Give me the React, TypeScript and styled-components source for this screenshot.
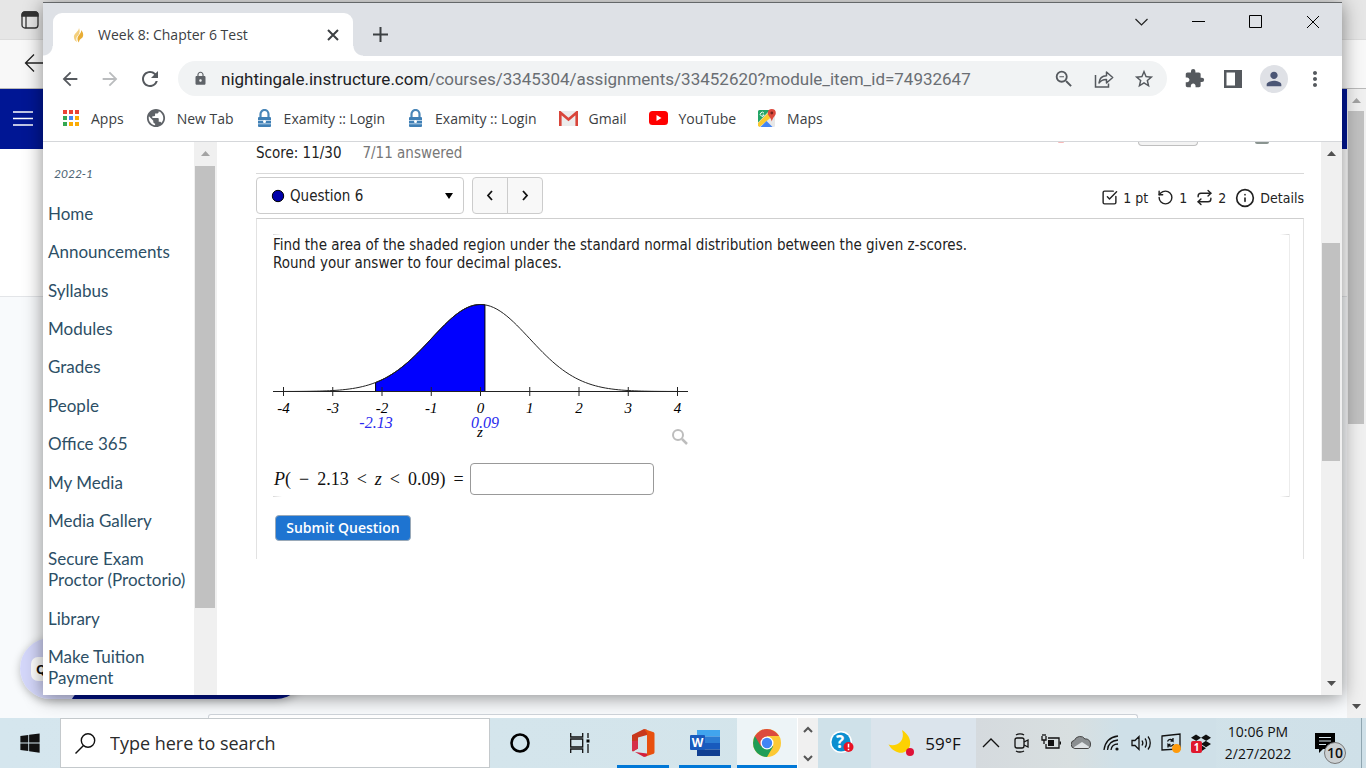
import React from 'react';
import styled, { createGlobalStyle, css } from 'styled-components';
import { MdArrowBack, MdArrowForward, MdRefresh, MdLock, MdZoomOut, MdStarBorder, MdExtension, MdPerson, MdMoreVert, MdPublic } from 'react-icons/md';
import { FaWindows, FaDropbox } from 'react-icons/fa';
import { SquareCheckBig, RotateCcw, Repeat, Info } from 'lucide-react';

const ui = '"Open Sans", "Noto Sans", sans-serif';
const quiz = '"DejaVu Sans Condensed", "DejaVu Sans", sans-serif';
const serif = '"Liberation Serif", serif';

const GlobalStyle = createGlobalStyle`
  *, *::before, *::after { box-sizing: border-box; }
  body { margin: 0; background: #f7f9fb; font-family: ${ui}; }
  button, input, select { font: inherit; color: inherit; margin: 0; }
  button { padding: 0; border: 0; background: none; display: inline-flex; align-items: center; justify-content: center; }
  a { color: inherit; text-decoration: none; }
  svg { display: block; flex: none; }
`;

const Desktop = styled.div`
  display: flex;
  flex-direction: column;
  min-height: 100vh;
`;
const Stage = styled.div`
  position: relative;
  flex: 1;
  display: flex;
  flex-direction: column;
  overflow: hidden;
`;

/* Window at the back */
const BackTabs = styled.div`
  height: 40px;
  padding: 11px 0 0 21px;
  background: #e6e6e6;
  border-bottom: 1px solid #dcdcdc;
`;
const BackToolbar = styled.div`
  height: 49px;
  padding: 13px 0 0 24px;
  background: #f8f8f8;
  border-bottom: 1px solid #b9b9b9;
`;
const BackBody = styled.div`
  flex: 1;
  display: flex;
`;
const BackPage = styled.div`
  flex: 1;
  display: flex;
  flex-direction: column;
  background: #f8fafc;
`;
const BackHeader = styled.div`
  height: 60px;
  padding: 21px 12px;
  background: #001694;
`;
const BackIntro = styled.div`
  height: 148px;
  background: #fff;
  border-bottom: 1px solid #e3e5e8;
`;
const BackCard = styled.div`
  height: 4px;
  margin: auto 209px 0 208px;
  background: #fff;
  border: 1px solid #cfd4da;
  border-bottom: 0;
  border-radius: 3px 3px 0 0;
`;
const ChatLauncher = styled.div`
  position: absolute;
  left: 20px;
  bottom: 19px;
  width: 286px;
  height: 61px;
  display: flex;
  align-items: center;
  border-radius: 31px;
  background: linear-gradient(125deg, #d4d7fa 77px, #001080 78px);
  box-shadow: 0 2px 8px rgba(0, 0, 0, 0.25);
`;
const ChatBubble = styled.span`
  margin-left: 11px;
  padding: 0 5px;
  border-radius: 7px;
  background: #fff;
  color: #111;
  font: 700 13px/24px ${ui};
`;

/* Scroll bars */
const ScrollTrack = styled.div<{ $width: number }>`
  width: ${p => p.$width}px;
  flex: none;
  display: flex;
  flex-direction: column;
  align-items: center;
  background: #f0f0f0;
`;
const ScrollArrow = styled.span<{ $dir: 'up' | 'down'; $dim?: boolean }>`
  flex: none;
  width: 9px;
  height: 5px;
  margin: ${p => (p.$dir === 'up' ? '9px 0 8px' : '8px 0 9px')};
  background: ${p => (p.$dim ? '#a3a3a3' : '#505050')};
  clip-path: ${p => (p.$dir === 'up' ? 'polygon(50% 0, 100% 100%, 0 100%)' : 'polygon(0 0, 100% 0, 50% 100%)')};
`;
const ScrollSpace = styled.span<{ $grow: number }>`
  flex: ${p => p.$grow} 1 0;
`;
const ScrollThumb = styled.span<{ $grow: number }>`
  flex: ${p => p.$grow} 1 0;
  align-self: stretch;
  margin: 0 2px 0 1px;
  background: #c1c1c1;
`;

/* Browser window */
const Window = styled.section`
  position: absolute;
  inset: 2px 24px 23px 43px;
  display: flex;
  flex-direction: column;
  background: #fff;
  border-top: 1px solid #646769;
  box-shadow: 0 2px 18px rgba(0, 0, 0, 0.45);
`;
const TitleBar = styled.header`
  height: 53px;
  flex: none;
  display: flex;
  padding: 0 1px 0 10px;
  background: #dee1e6;
`;
const Tab = styled.div`
  position: relative;
  display: flex;
  align-items: center;
  width: 300px;
  height: 43px;
  margin-top: 10px;
  padding: 0 14px 0 19px;
  gap: 12px;
  background: #fff;
  border-radius: 9px 9px 0 0;
  color: #3c4043;
  font-size: 14px;
  &::before, &::after {
    content: '';
    position: absolute;
    bottom: 0;
    width: 10px;
    height: 10px;
  }
  &::before { left: -10px; background: radial-gradient(circle at 0 0, transparent 9px, #fff 10px); }
  &::after { right: -10px; background: radial-gradient(circle at 100% 0, transparent 9px, #fff 10px); }
`;
const TabTitle = styled.span`
  flex: 1;
  white-space: nowrap;
`;
const NewTab = styled.button`
  width: 24px;
  height: 24px;
  margin: 19px auto 0 15px;
`;
const Caption = styled.div`
  display: flex;
  align-self: flex-start;
  button { width: 57px; height: 37px; }
`;
const Toolbar = styled.div`
  height: 45px;
  flex: none;
  display: flex;
  align-items: center;
  gap: 15px;
  padding: 0 15px;
  color: #5f6368;
`;
const NavButtons = styled.div`
  display: flex;
  gap: 16px;
  margin-right: 1px;
`;
const IconButton = styled.button<{ $dim?: boolean }>`
  width: 24px;
  height: 24px;
  font-size: 22px;
  color: ${p => (p.$dim ? '#babcbe' : '#55595e')};
`;
const Omnibox = styled.div`
  flex: 1;
  min-width: 0;
  display: flex;
  align-items: center;
  gap: 16px;
  height: 35px;
  padding: 0 11px 0 15px;
  border-radius: 18px;
  background: #f1f3f4;
`;
const Url = styled.p`
  flex: 1;
  min-width: 0;
  overflow: hidden;
  margin: 0 0 0 -3px;
  font: 17px/24px Roboto, ${ui};
  white-space: nowrap;
  color: #6a6e73;
  b { font-weight: 400; color: #202124; }
`;
const Avatar = styled.button`
  width: 28px;
  height: 28px;
  border-radius: 50%;
  background: #dfe1e6;
  color: #4b5675;
  font-size: 22px;
`;
const Bookmarks = styled.nav`
  height: 41px;
  flex: none;
  display: flex;
  align-items: center;
  gap: 22px;
  padding: 0 19px 6px;
  border-bottom: 1px solid #d5d7da;
  color: #3c4043;
  font-size: 14px;
`;
const Bookmark = styled.a`
  display: flex;
  align-items: center;
  gap: 11px;
  white-space: nowrap;
  color: #3c4043;
`;

/* Course page */
const Page = styled.div`
  flex: 1;
  min-height: 0;
  display: flex;
`;
const Sidebar = styled.nav`
  width: 151px;
  flex: none;
  display: flex;
  flex-direction: column;
  padding: 24px 5px 7px;
  font: 17px/21px Lato, ${ui};
  color: #2d4f66;
`;
const Term = styled.p`
  margin: 0 0 21px 6px;
  font: italic 12px/16px Lato, ${ui};
  color: #4d6474;
`;
const CourseLinks = styled.ul`
  flex: 1;
  display: flex;
  flex-direction: column;
  justify-content: space-between;
  margin: 0;
  padding: 0;
  list-style: none;
  a { display: block; white-space: pre; }
`;
const Content = styled.main`
  flex: 1;
  min-width: 0;
  padding: 0 17px 0 39px;
  font: 15px/18px ${quiz};
  color: #222;
`;
const CutOffRow = styled.div`
  height: 4px;
  display: flex;
  justify-content: flex-end;
  align-items: flex-start;
  padding-right: 35px;
`;
const CutOffMark = styled.span<{ $w: number; $h: number; $color: string; $gap: number }>`
  width: ${p => p.$w}px;
  height: ${p => p.$h}px;
  margin-right: ${p => p.$gap}px;
  background: ${p => p.$color};
  border-radius: 0 0 6px 6px;
`;
const CutOffButton = styled.span`
  width: 60px;
  height: 4px;
  margin-right: 57px;
  background: #f3f3f3;
  border: 1px solid #bfbfbf;
  border-top: 0;
  border-radius: 0 0 4px 4px;
`;
const ScoreRow = styled.div`
  display: flex;
  gap: 21px;
  height: 28px;
  margin-bottom: 3px;
  border-bottom: 1px solid #d9d9d9;
  line-height: 14px;
  span + span { color: #777; }
`;
const QuestionBar = styled.div`
  display: flex;
  align-items: center;
  height: 37px;
  margin-bottom: 4px;
`;
const Picker = styled.label`
  display: grid;
  align-items: center;
  width: 208px;
  height: 37px;
  border: 1px solid #ccc;
  border-radius: 4px;
  background: #fff;
  > * { grid-area: 1 / 1; }
  svg:first-child { margin-left: 14px; }
  svg:last-child { margin-right: 10px; justify-self: end; }
  svg { pointer-events: none; z-index: 1; }
`;
const PickerSelect = styled.select`
  appearance: none;
  width: 100%;
  height: 35px;
  padding: 0 24px 0 33px;
  border: 0;
  background: transparent;
  font-size: 15px;
`;
const Pager = styled.div`
  display: flex;
  margin-left: 8px;
  border: 1px solid #ccc;
  border-radius: 4px;
  background: #f8f8f8;
  button { width: 34px; height: 35px; }
  button + button { width: 35px; border-left: 1px solid #ccc; }
`;
const Details = styled.div`
  display: flex;
  align-items: center;
  gap: 9px;
  margin: 4px 0 0 auto;
  font-size: 14px;
`;
const Detail = styled.span`
  display: flex;
  align-items: center;
  gap: 5px;
`;
const QuestionBox = styled.section`
  padding: 15px 13px 18px 16px;
  border: 1px solid #e2e2e2;
  border-top-color: #cfcfcf;
  border-bottom: 0;
`;
const QuestionBody = styled.div`
  height: 263px;
  padding-top: 2px;
  border-right: 1px solid #ececec;
  background:
    linear-gradient(90deg, #d8d8d8, #fff) left top / 9px 1px no-repeat,
    linear-gradient(90deg, #d8d8d8, #fff) left bottom / 9px 1px no-repeat,
    linear-gradient(270deg, #d8d8d8, #fff) right top / 9px 1px no-repeat,
    linear-gradient(270deg, #d8d8d8, #fff) right bottom / 9px 1px no-repeat;
`;
const Prompt = styled.p`
  margin: 0 0 23px;
`;
const Answer = styled.label`
  display: flex;
  align-items: center;
  margin-top: 18px;
  font: 18px/32px ${serif};
  color: #111;
`;
const Formula = styled.span`
  display: flex;
  gap: 8px;
  padding-left: 1px;
  margin-right: 6px;
  white-space: nowrap;
`;
const AnswerInput = styled.input`
  width: 184px;
  height: 32px;
  padding: 4px 8px;
  border: 1px solid #999;
  border-radius: 4px;
  background: #fff;
`;
const Submit = styled.button`
  width: 136px;
  height: 26px;
  margin: 18px 0 0 2px;
  border: 1px solid #9aa9b8;
  border-radius: 4px;
  background: #1e74d1;
  color: #fff;
  font: 600 14px/18px "Open Sans", sans-serif;
`;

/* Task bar */
const Taskbar = styled.footer`
  height: 50px;
  flex: none;
  display: flex;
  background: linear-gradient(90deg, #d5e6ee, #d3e4ea 70%, #cfe0e8);
  color: #111;
`;
const Cell = styled.button<{ $w?: number; $open?: boolean; $active?: boolean; $tint?: string }>`
  position: relative;
  width: ${p => p.$w || 60}px;
  height: 50px;
  flex: none;
  background: ${p => (p.$active ? '#edf4f7' : p.$tint || 'transparent')};
  ${p => (p.$open || p.$active) && css`
    &::after {
      content: '';
      position: absolute;
      bottom: 0;
      left: ${p.$active ? 0 : 4}px;
      right: ${p.$active ? 0 : 4}px;
      height: 3px;
      background: #0078d7;
    }
  `}
`;
const Search = styled.label`
  flex: 0 1 430px;
  min-width: 0;
  display: flex;
  align-items: center;
  gap: 12px;
  padding-left: 14px;
  border: 1px solid #c4c9cc;
  background: #fff;
`;
const SearchInput = styled.input`
  flex: 1;
  min-width: 0;
  border: 0;
  background: none;
  font-size: 18px;
  &::placeholder { color: #2b2b2b; opacity: 1; }
`;
const Apps = styled.div`
  display: flex;
  gap: 2px;
  margin-left: 3px;
`;
const Scroller = styled.div`
  width: 21px;
  flex: none;
  display: flex;
  flex-direction: column;
  justify-content: space-between;
  padding: 6px 0 5px;
  background: #f0f0f0;
  border-left: 1px solid #fff;
  button { height: 10px; }
`;
const Tray = styled.div`
  display: flex;
  margin-left: auto;
`;
const Weather = styled.button`
  width: 105px;
  height: 50px;
  gap: 10px;
  padding-left: 2px;
  background: #dbe4ec;
  font-size: 17px;
  white-space: nowrap;
`;
const TrayIcons = styled.div`
  display: flex;
  background: linear-gradient(90deg, #d5dade, #d8dfe0 40%, #cfe0e8 60%);
`;
const Clock = styled.time`
  width: 84px;
  padding-top: 3px;
  font-size: 14px;
  line-height: 22px;
  text-align: center;
`;
const ShowDesktop = styled.div`
  width: 5px;
  margin-left: 11px;
  border-left: 1px solid #8fa5b0;
`;

function Flame() {
  return (
    <svg width="14" height="16" viewBox="0 0 14 16">
      <path d="M7 1C7 5 1 6 2 11c.3 2 1.500 3 3 4C3.500 11 5 9.500 6.500 8 8 6 8 3 7 1z" fill="#f3cf7d" />
      <path d="M9 3c1 3-3 5-3.500 8-.2 2 .5 3.500 1.500 4.500C6.800 13 8.500 12 10 11c2-2 1.500-5.500-1-8z" fill="#e8ad35" />
    </svg>
  );
}

function Cross({ size, width = 1 }: { size: number; width?: number }) {
  return (
    <svg width={size} height={size} viewBox={`0 0 ${size} ${size}`} stroke="currentColor" strokeWidth={width}>
      <path d={`M1 1L${size - 1} ${size - 1}M${size - 1} 1L1 ${size - 1}`} />
    </svg>
  );
}

function ShareIcon() {
  return (
    <svg width="20" height="20" viewBox="0 0 20 20" fill="none" stroke="currentColor" strokeWidth="1.500">
      <path d="M1.500 6v12h13v-3.500" />
      <path d="M5 14c.5-5 3-7.200 7.500-7.200V3l6.200 5.500-6.200 5.500v-3.500C9 10.300 7 11.500 5 14z" strokeLinejoin="round" />
    </svg>
  );
}

function AppsIcon() {
  const colors = ['#ea4335', '#ea4335', '#ea4335', '#34a853', '#4285f4', '#fbab05', '#34a853', '#fbab05', '#fbab05'];
  return (
    <svg width="18" height="18" viewBox="0 0 18 18">
      {colors.map((c, i) => <rect key={i} x={1 + (i % 3) * 6} y={1 + Math.floor(i / 3) * 6} width="4" height="4" fill={c} />)}
    </svg>
  );
}

function GlobeIcon() {
  return <MdPublic size={20} viewBox="1 1 22 22" color="#5f6368" />;
}

function PadlockIcon() {
  return (
    <svg width="17" height="18" viewBox="0 0 17 18">
      <path d="M4.500 9V5a4 4 0 0 1 8 0v4" fill="none" stroke="#4a86b8" strokeWidth="2.200" />
      <rect x="2" y="8" width="13" height="10" rx="1" fill="#3f7fb5" />
      <path d="M2 11.500h13M2 14.800h13" stroke="#b7d2e8" />
      <circle cx="8.500" cy="12.500" r="1.500" fill="#fff" />
    </svg>
  );
}

function GmailIcon() {
  return (
    <svg width="19" height="15" viewBox="0 0 19 15">
      <rect width="19" height="15" rx="1.500" fill="#ececec" />
      <path d="M1.300 15V1.500L9.500 8.500l8.200-7V15" fill="none" stroke="#d9453a" strokeWidth="2.600" />
    </svg>
  );
}

function YouTubeIcon() {
  return (
    <svg width="19" height="14" viewBox="0 0 19 14">
      <rect width="19" height="14" rx="3.500" fill="#f00" />
      <path d="M7.500 4v6l5-3z" fill="#fff" />
    </svg>
  );
}

function MapsIcon() {
  return (
    <svg width="18" height="18" viewBox="0 0 18 18">
      <rect y="1" width="17" height="17" rx="1.500" fill="#e8e8e8" />
      <path d="M1.500 1H12L0 13.500V2.500A1.500 1.500 0 0 1 1.500 1z" fill="#23a566" />
      <path d="M0 14L11 3l3 4.500L1.500 18 0 16.500z" fill="#fbcb2f" />
      <path d="M2.500 18l6-6 6 6z" fill="#4285f4" />
      <path d="M13.800 0a4 4 0 0 1 4 4c0 3-3 4-4 8.500-1-4.500-4-5.500-4-8.500a4 4 0 0 1 4-4z" fill="#dd4b3e" />
      <circle cx="13.800" cy="4" r="1.400" fill="#7a231c" />
      <path d="M6 4.200A2 2 0 1 0 6.200 6H4.500" fill="none" stroke="#fff" />
    </svg>
  );
}

const X0 = 207.5;
const UNIT = 49.25;
const AXIS = 96.5;
const curve = (from: number, to: number) => {
  const points: string[] = [];
  for (let i = 0; i <= 120; i++) {
    const z = from + ((to - from) * i) / 120;
    points.push(`${(X0 + z * UNIT).toFixed(2)} ${(AXIS - 87 * Math.exp((-z * z) / 2)).toFixed(2)}`);
  }
  return points.join('L');
};

const Chart = styled.svg`
  font: italic 15px ${serif};
  text-anchor: middle;
`;

function NormalCurve() {
  const left = X0 - 2.13 * UNIT;
  const right = X0 + 0.09 * UNIT;
  return (
    <Chart width="416" height="150" viewBox="0 0 416 150" role="img" aria-label="Standard normal curve">
      <path d={`M${left} ${AXIS}L${curve(-2.13, 0.09)}L${right} ${AXIS}Z`} fill="#00f" stroke="#000" />
      <path d={`M${curve(-4, 4)}`} fill="none" stroke="#222" />
      <path d={`M0 ${AXIS}H415`} stroke="#222" />
      {[-4, -3, -2, -1, 0, 1, 2, 3, 4].map(n => (
        <g key={n}>
          <path d={`M${X0 + n * UNIT} 92v9`} stroke="#222" />
          <text x={X0 + n * UNIT} y="118">{n}</text>
        </g>
      ))}
      <text x={103} y="133" fill="#2a2aee" fontSize="16">-2.13</text>
      <text x={212} y="133" fill="#2a2aee" fontSize="16">0.09</text>
      <text x={207} y="142">z</text>
      <g fill="none" stroke="#bdbdbd">
        <circle cx="405" cy="140" r="5" strokeWidth="2" />
        <path d="M409 144l5 5" strokeWidth="2.500" />
      </g>
    </Chart>
  );
}

function OfficeIcon() {
  return (
    <svg width="24" height="30" viewBox="0 0 24 30">
      <path d="M1 7L13 1l3 .8V7L7 9.500v11L2 23.500c-1-.5-1-1-1-2z" fill="#c8381c" />
      <path d="M1 13v9c0 1 .5 1.500 1.500 1l4.500-2.500v-8z" fill="#d6304a" />
      <path d="M13 1l9 3c1 .4 1.500 1 1.500 2v18c0 1-.5 1.600-1.500 2l-9 3 3-3V5z" fill="#e8500f" />
      <path d="M4 24l12 1.500v2.500l-3 1z" fill="#d3203c" />
    </svg>
  );
}

const WordLetter = styled.text`
  font: 700 12px ${ui};
  text-anchor: middle;
  fill: #fff;
`;

function WordIcon() {
  return (
    <svg width="30" height="26" viewBox="0 0 30 26">
      <path d="M7 0h23v6.500H7z" fill="#41a5ee" />
      <path d="M7 6.500h23V13H7z" fill="#2b7cd3" />
      <path d="M7 13h23v6.500H7z" fill="#185abd" />
      <path d="M7 19.500h23V26H7z" fill="#103f91" />
      <rect y="5" width="15" height="15" rx="1" fill="#185abd" />
      <WordLetter x="7.500" y="17">W</WordLetter>
    </svg>
  );
}

function ChromeIcon() {
  return (
    <svg width="28" height="28" viewBox="0 0 28 28">
      <circle cx="14" cy="14" r="14" fill="#fcc934" />
      <path d="M14 14L1.900 7A14 14 0 0 0 14 28l6.100-10.500z" fill="#1f9d57" />
      <path d="M1.900 7a14 14 0 0 1 24.200 0H14v7L8 17.500z" fill="#dc4a3d" />
      <circle cx="14" cy="14" r="6.500" fill="#fff" />
      <circle cx="14" cy="14" r="5.200" fill="#4285f4" />
    </svg>
  );
}

const GlyphText = styled.text<{ $size: number; $fill: string }>`
  font: 700 ${p => p.$size}px ${ui};
  text-anchor: middle;
  fill: ${p => p.$fill};
`;

function HelpIcon() {
  return (
    <svg width="30" height="24" viewBox="0 0 30 24">
      <circle cx="11" cy="11" r="11" fill="#fff" />
      <circle cx="11" cy="11" r="9.500" fill="#0c8fd0" />
      <GlyphText $size={17} $fill="#fff" x="10" y="17">?</GlyphText>
      <circle cx="18.500" cy="16" r="5" fill="#e81123" />
      <path d="M18.500 12.800v3.700M18.500 17.700v1.500" stroke="#fff" strokeWidth="1.500" />
    </svg>
  );
}

function MoonIcon() {
  return (
    <svg width="27" height="27" viewBox="0 0 27 27">
      <path d="M14 0c6 4 9 9 8 15-1 7-9 10-15 6-3-1.500-5-4-6.500-6.500C8 17 18 12 14 0z" fill="#fdd102" />
      <circle cx="22" cy="22" r="4" fill="#df1138" />
    </svg>
  );
}

const trayIcons: [string, React.ReactNode][] = [
  ['Show hidden icons', <path d="M2 14l8-8 8 8" />],
  ['Meet now', <><rect x="4" y="5" width="9" height="10" rx="2" /><path d="M13 9l4-2v7l-4-2M5 2c2-1.500 6-1.500 8 0M5 18c2 1.300 6 1.300 8 0" /></>],
  ['Power', <><path d="M7 5h11v10H5v-4M19.500 8.500v3" /><path d="M7 7h6v6H7z" fill="#111" stroke="none" /><path d="M1 3v4h4V3M2 1v2M4 1v2M3 7v4" /></>],
  ['OneDrive', <><path d="M4 15.500a4.200 4.200 0 0 1-.5-8.300A6 6 0 0 1 14 6c3-.5 5.500 2 5.500 5s-1 4.500-3.500 4.500z" fill="#8b8f91" stroke="#444" strokeWidth="1" /><path d="M2.500 14.500L11 9l7.500 5c-.7.900-1.500 1-2.500 1H4z" fill="#dfe3e5" stroke="none" /></>],
  ['Network', <><path d="M3 17C4 9 9 4 17 3M6.500 17C7 11 11 7.500 17 7M10 17c.5-3.500 3-6 7-6" /><circle cx="16" cy="16" r="1.600" fill="#111" stroke="none" /></>],
  ['Volume', <path d="M1 7.500h3l4-4v13l-4-4H1zM11 7.500c1 1.500 1 3.500 0 5M14 5.500c2 2.500 2 6.500 0 9M17 3.500c3 3.500 3 9.500 0 13" />],
  ['Updates', <><path d="M1 3l18-2v15L1 17z" /><path d="M6.500 8.500c1-2.500 4-3 5.500-.8V5M12.200 8H9.500M12.500 11c-1 2.500-4 3-5.500.8v2.700M6.800 11.500h2.700" /><circle cx="15.500" cy="15.500" r="4.500" fill="#ff9a0a" stroke="none" /></>],
];

const BadgeText = styled.span`
  position: absolute;
  left: 5px;
  bottom: 15px;
  width: 11px;
  border-radius: 2px;
  background: #e0182d;
  color: #fff;
  font: 700 10px/12px ${ui};
`;
const CountBadge = styled.span`
  position: absolute;
  left: 24px;
  top: 24px;
  width: 22px;
  height: 22px;
  border: 1px solid #777;
  border-radius: 50%;
  background: #ccd1d3;
  color: #111;
  font: 600 14px/20px ${ui};
`;

const bookmarks: [string, React.ReactNode][] = [
  ['Apps', <AppsIcon />],
  ['New Tab', <GlobeIcon />],
  ['Examity :: Login', <PadlockIcon />],
  ['Examity :: Login', <PadlockIcon />],
  ['Gmail', <GmailIcon />],
  ['YouTube', <YouTubeIcon />],
  ['Maps', <MapsIcon />],
];

const courseLinks = ['Home', 'Announcements', 'Syllabus', 'Modules', 'Grades', 'People', 'Office 365', 'My Media', 'Media Gallery', 'Secure Exam\nProctor (Proctorio)', 'Library', 'Make Tuition\nPayment'];

function Scrollbar({ width, before, thumb, after, dim, open }: { width: number; before: number; thumb: number; after: number; dim?: boolean; open?: boolean }) {
  return (
    <ScrollTrack $width={width} aria-hidden="true">
      <ScrollArrow $dir="up" $dim={dim} />
      <ScrollSpace $grow={before} />
      <ScrollThumb $grow={thumb} />
      <ScrollSpace $grow={after} />
      {!open && <ScrollArrow $dir="down" />}
    </ScrollTrack>
  );
}

function BackWindow() {
  return (
    <>
      <BackTabs>
        <svg width="18" height="18" viewBox="0 0 18 18" fill="none" stroke="#333" strokeWidth="1.300">
          <rect x="1" y="1" width="16" height="16" rx="3" />
          <path d="M1 3.500A2.500 2.500 0 0 1 3.500 1h11A2.500 2.500 0 0 1 17 3.500V5H1z" fill="#333" />
          <path d="M5 5v12" />
        </svg>
      </BackTabs>
      <BackToolbar>
        <svg width="20" height="20" viewBox="0 0 20 20" fill="none" stroke="#222" strokeWidth="1.300"><path d="M20 10H2M10 1.500L1.500 10l8.500 8.500" /></svg>
      </BackToolbar>
      <BackBody>
        <BackPage>
          <BackHeader>
            <svg width="22" height="17" viewBox="0 0 22 17" stroke="#fff" strokeWidth="1.600"><path d="M1 2h20M1 8.500h20M1 15h20" /></svg>
          </BackHeader>
          <BackIntro />
          <BackCard />
        </BackPage>
        <Scrollbar width={19} before={0} thumb={314} after={272} dim />
      </BackBody>
      <ChatLauncher><ChatBubble>Q</ChatBubble></ChatLauncher>
    </>
  );
}

export default function App() {
  return (
    <Desktop>
      <GlobalStyle />
      <Stage>
        <BackWindow />
        <Window>
          <TitleBar>
            <Tab>
              <Flame />
              <TabTitle>Week 8: Chapter 6 Test</TabTitle>
              <button aria-label="Close tab"><Cross size={12} width={2} /></button>
            </Tab>
            <NewTab aria-label="New tab">
              <svg width="15" height="15" viewBox="0 0 15 15" stroke="#3c4043" strokeWidth="2"><path d="M7.500 0v15M0 7.500h15" /></svg>
            </NewTab>
            <Caption>
              <button aria-label="Search tabs"><svg width="13" height="8" viewBox="0 0 13 8" fill="none" stroke="#222" strokeWidth="1.200"><path d="M.5 1l6 6 6-6" /></svg></button>
              <button aria-label="Minimize"><svg width="13" height="13" viewBox="0 0 13 13" stroke="#000"><path d="M0 6.500h13" /></svg></button>
              <button aria-label="Maximize"><svg width="13" height="13" viewBox="0 0 13 13" fill="none" stroke="#000"><path d="M.5.5h12v12H.5z" /></svg></button>
              <button aria-label="Close"><Cross size={14} /></button>
            </Caption>
          </TitleBar>
          <Toolbar>
            <NavButtons>
              <IconButton aria-label="Back"><MdArrowBack /></IconButton>
              <IconButton aria-label="Forward" $dim><MdArrowForward /></IconButton>
              <IconButton aria-label="Reload"><MdRefresh size={24} /></IconButton>
            </NavButtons>
            <Omnibox>
              <MdLock size={15} />
              <Url><b>nightingale.instructure.com</b>/courses/3345304/assignments/33452620?module_item_id=74932647</Url>
              <IconButton aria-label="Zoom"><MdZoomOut /></IconButton>
              <IconButton aria-label="Share"><ShareIcon /></IconButton>
              <IconButton aria-label="Bookmark this page"><MdStarBorder /></IconButton>
            </Omnibox>
            <IconButton aria-label="Extensions"><MdExtension size={21} /></IconButton>
            <IconButton aria-label="Side panel">
              <svg width="18" height="18" viewBox="0 0 18 18"><path d="M0 0h18v18H0zM2.500 2.500v13H11v-13z" fill="currentColor" fillRule="evenodd" /></svg>
            </IconButton>
            <Avatar aria-label="Profile"><MdPerson /></Avatar>
            <IconButton aria-label="Menu"><MdMoreVert size={24} /></IconButton>
          </Toolbar>
          <Bookmarks>
            {bookmarks.map(([name, icon], i) => <Bookmark key={i} href="#">{icon}{name}</Bookmark>)}
          </Bookmarks>
          <Page>
            <Sidebar>
              <Term>2022-1</Term>
              <CourseLinks>
                {courseLinks.map(name => <li key={name}><a href="#">{name}</a></li>)}
              </CourseLinks>
            </Sidebar>
            <Scrollbar width={23} before={2} thumb={442} after={87} dim open />
            <Content>
              <CutOffRow>
                <CutOffMark $w={6} $h={1} $color="#f7b9b9" $gap={74} />
                <CutOffButton />
                <CutOffMark $w={14} $h={2} $color="#8a9490" $gap={0} />
              </CutOffRow>
              <ScoreRow><span>Score: 11/30</span><span>7/11 answered</span></ScoreRow>
              <QuestionBar>
                <Picker>
                  <svg width="14" height="14" viewBox="0 0 14 14"><circle cx="7" cy="7" r="5.700" fill="#00a" stroke="#000" /></svg>
                  <PickerSelect aria-label="Question"><option>Question 6</option></PickerSelect>
                  <svg width="8" height="6" viewBox="0 0 8 6"><path d="M0 0h8L4 6z" fill="#000" /></svg>
                </Picker>
                <Pager>
                  <button aria-label="Previous question"><svg width="8" height="11" viewBox="0 0 8 11" fill="none" stroke="#111" strokeWidth="1.800"><path d="M6 1L2 5.500 6 10" /></svg></button>
                  <button aria-label="Next question"><svg width="8" height="11" viewBox="0 0 8 11" fill="none" stroke="#111" strokeWidth="1.800"><path d="M2 1l4 4.500L2 10" /></svg></button>
                </Pager>
                <Details>
                  <Detail><SquareCheckBig size={17} />1 pt</Detail>
                  <Detail><RotateCcw size={17} />1</Detail>
                  <Detail><Repeat size={17} />2</Detail>
                  <Detail><Info size={20} />Details</Detail>
                </Details>
              </QuestionBar>
              <QuestionBox>
                <QuestionBody>
                  <Prompt>
                    Find the area of the shaded region under the standard normal distribution between the given z-scores.<br />
                    Round your answer to four decimal places.
                  </Prompt>
                  <NormalCurve />
                  <Answer>
                    <Formula>
                      <span><i>P</i>(</span><span>−</span><span>2.13</span><span>&lt;</span><i>z</i><span>&lt;</span><span>0.09)</span><span>=</span>
                    </Formula>
                    <AnswerInput type="text" />
                  </Answer>
                </QuestionBody>
                <Submit>Submit Question</Submit>
              </QuestionBox>
            </Content>
            <Scrollbar width={21} before={79} thumb={217} after={211} />
          </Page>
        </Window>
      </Stage>
      <Taskbar>
        <Cell aria-label="Start"><FaWindows size={22} /></Cell>
        <Search>
          <svg width="21" height="21" viewBox="0 0 21 21" fill="none" stroke="#111" strokeWidth="1.400"><circle cx="13" cy="7.500" r="6.700" /><path d="M8.500 12.500L.5 20.500" /></svg>
          <SearchInput aria-label="Search" placeholder="Type here to search" />
        </Search>
        <Cell aria-label="Cortana"><svg width="20" height="20" viewBox="0 0 20 20"><circle cx="10" cy="10" r="8.500" fill="none" stroke="#000" strokeWidth="2.600" /></svg></Cell>
        <Cell aria-label="Task view">
          <svg width="20" height="20" viewBox="0 0 20 20" fill="none" stroke="#111" strokeWidth="1.300"><path d="M.7 0v4h12V0M.7 20v-4h12v4M.7 6h12v8H.7zM18 0v5M18 11v9" /><path d="M16.500 6.500h3v3h-3z" fill="#000" stroke="none" /></svg>
        </Cell>
        <Apps>
          <Cell aria-label="Office" $open><OfficeIcon /></Cell>
          <Cell aria-label="Word" $open><WordIcon /></Cell>
          <Cell aria-label="Chrome" $active><ChromeIcon /></Cell>
        </Apps>
        <Scroller>
          <button aria-label="Scroll up"><svg width="10" height="7" viewBox="0 0 10 7" fill="none" stroke="#555" strokeWidth="2"><path d="M1 6l4-4 4 4" /></svg></button>
          <button aria-label="Scroll down"><svg width="10" height="7" viewBox="0 0 10 7" fill="none" stroke="#555" strokeWidth="2"><path d="M1 1l4 4 4-4" /></svg></button>
        </Scroller>
        <Tray>
          <Cell aria-label="Help" $w={53} $tint="#cfe1e9"><HelpIcon /></Cell>
          <Weather><MoonIcon />59°F</Weather>
          <TrayIcons>
            {trayIcons.map(([name, art]) => (
              <Cell key={name} aria-label={name} $w={30}>
                <svg width="20" height="20" viewBox="0 0 20 20" fill="none" stroke="#111" strokeWidth="1.300">{art}</svg>
              </Cell>
            ))}
            <Cell aria-label="Dropbox" $w={30}><FaDropbox size={20} /><BadgeText>1</BadgeText></Cell>
          </TrayIcons>
          <Clock>10:06 PM<br />2/27/2022</Clock>
          <Cell aria-label="Notifications" $w={50}>
            <svg width="20" height="20" viewBox="0 0 20 20"><path d="M0 0h20v16H8l-4 4v-4H0z" fill="#000" /><path d="M4 4.500h12M4 8h12M4 11.500h7" stroke="#d5e3ea" strokeWidth="1.200" /></svg>
            <CountBadge>10</CountBadge>
          </Cell>
          <ShowDesktop />
        </Tray>
      </Taskbar>
    </Desktop>
  );
}
